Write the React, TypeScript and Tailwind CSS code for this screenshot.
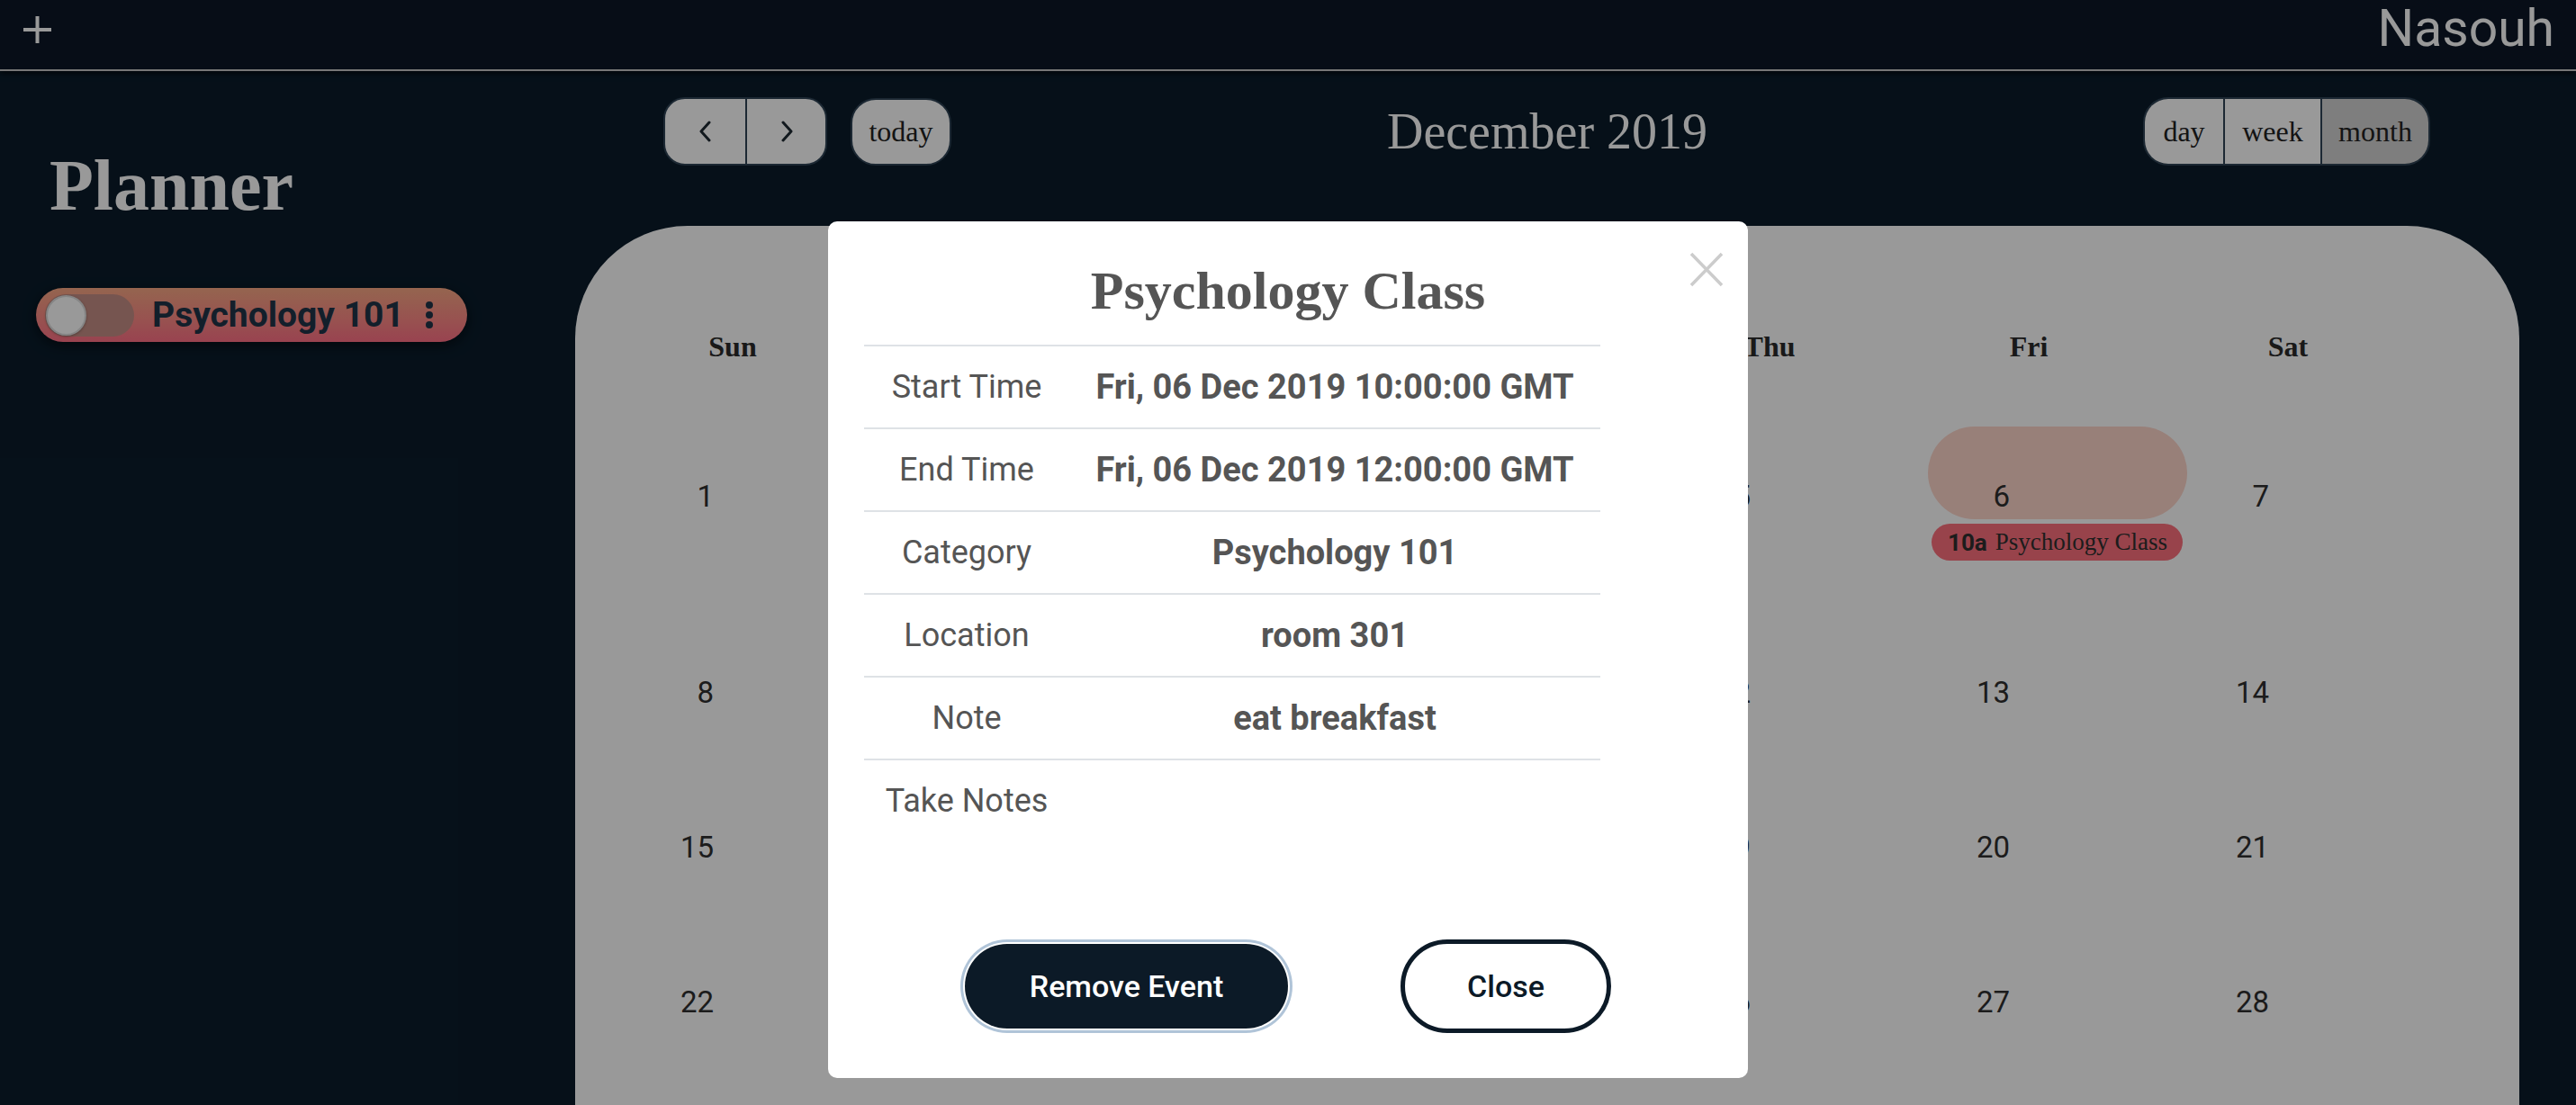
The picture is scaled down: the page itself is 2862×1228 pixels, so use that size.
import React from "react";

const serif = "font-['Liberation_Serif','Times_New_Roman',serif]";

type Day = { n: number; today?: boolean; event?: boolean };

const weeks: Day[][] = [
  [{ n: 1 }, { n: 2 }, { n: 3 }, { n: 4 }, { n: 5 }, { n: 6, today: true, event: true }, { n: 7 }],
  [{ n: 8 }, { n: 9 }, { n: 10 }, { n: 11 }, { n: 12 }, { n: 13 }, { n: 14 }],
  [{ n: 15 }, { n: 16 }, { n: 17 }, { n: 18 }, { n: 19 }, { n: 20 }, { n: 21 }],
  [{ n: 22 }, { n: 23 }, { n: 24 }, { n: 25 }, { n: 26 }, { n: 27 }, { n: 28 }],
  [{ n: 29 }, { n: 30 }, { n: 31 }, { n: 1 }, { n: 2 }, { n: 3 }, { n: 4 }],
];

const dayNames = ["Sun", "Mon", "Tue", "Wed", "Thu", "Fri", "Sat"];

const rows: [string, string][] = [
  ["Start Time", "Fri, 06 Dec 2019 10:00:00 GMT"],
  ["End Time", "Fri, 06 Dec 2019 12:00:00 GMT"],
  ["Category", "Psychology 101"],
  ["Location", "room 301"],
  ["Note", "eat breakfast"],
  ["Take Notes", ""],
];

function Chevron({ dir }: { dir: "l" | "r" }) {
  return (
    <svg width="18" height="24" viewBox="0 0 18 24" fill="none">
      <path
        d={dir === "l" ? "M13 2 L4 12 L13 22" : "M5 2 L14 12 L5 22"}
        stroke="#1f2a33"
        strokeWidth="3"
        strokeLinecap="round"
        strokeLinejoin="round"
      />
    </svg>
  );
}

export default function App() {
  return (
    <div className="relative h-[1228px] w-[2862px] overflow-hidden bg-[#0a1c2b] font-['Roboto',sans-serif]">
      {/* top bar */}
      <header className="flex h-[79px] items-start justify-between border-b-2 border-[#c6c6c6] bg-[#0c1727] shadow-[0_3px_6px_rgba(0,0,0,0.6)]">
        <svg className="ml-[26px] mt-[18px]" width="31" height="30" viewBox="0 0 31 30" fill="none">
          <path d="M15.5 0 V30 M0 15 H31" stroke="#ffffff" strokeWidth="4" />
        </svg>
        <div className="mr-[24px] mt-[3px] text-[57px] leading-none text-white">Nasouh</div>
      </header>

      <div className="flex">
        {/* sidebar */}
        <aside className="w-[639px] shrink-0">
          <h1 className={`${serif} ml-[55px] mt-[87px] text-[80px] font-bold leading-none text-white`}>Planner</h1>
          <div className="ml-[40px] mt-[74px] flex h-[60px] w-[479px] items-center rounded-full bg-gradient-to-b from-[#f8a884] to-[#ff7085] pl-[10px] shadow-[0_4px_14px_rgba(0,0,0,0.55)]">
            <div className="flex h-[47px] w-[99px] items-center rounded-full bg-[#c58e85] pl-[1px]">
              <div className="h-[45px] w-[45px] rounded-full border-2 border-[#dedede] bg-white shadow-[0_1px_3px_rgba(0,0,0,0.3)]" />
            </div>
            <span className="ml-[20px] text-[39px] font-bold leading-none text-[#213548]">Psychology 101</span>
            <div className="ml-[24px] flex flex-col gap-[3px]">
              <span className="h-[8px] w-[8px] rounded-full bg-[#213548]" />
              <span className="h-[8px] w-[8px] rounded-full bg-[#213548]" />
              <span className="h-[8px] w-[8px] rounded-full bg-[#213548]" />
            </div>
          </div>
        </aside>

        {/* calendar */}
        <main className="w-[2160px] shrink-0">
          <div className="mt-[29px] flex h-[76px] items-center justify-between pl-[98px] pr-[99px]">
            <div className="flex items-center">
              <div className="flex h-[76px] overflow-hidden rounded-[24px] border-2 border-[#2f4355] bg-white">
                <div className="flex w-[89px] items-center justify-center">
                  <Chevron dir="l" />
                </div>
                <div className="flex w-[89px] items-center justify-center border-l-2 border-[#2f4355]">
                  <Chevron dir="r" />
                </div>
              </div>
              <div className={`${serif} ml-[26px] flex h-[75px] w-[112px] items-center justify-center rounded-[28px] border-2 border-[#2f4355] bg-white text-[32px] text-[#222]`}>
                today
              </div>
            </div>
            <div className={`${serif} text-[56px] leading-none text-white`}>December 2019</div>
            <div className={`${serif} flex h-[76px] overflow-hidden rounded-[28px] border-2 border-[#2f4355] text-[32px] text-[#222]`}>
              <div className="flex w-[87px] items-center justify-center bg-white">day</div>
              <div className="flex w-[108px] items-center justify-center border-l-2 border-[#2f4355] bg-white">week</div>
              <div className="flex w-[120px] items-center justify-center border-l-2 border-[#2f4355] bg-[#d2d2d2]">month</div>
            </div>
          </div>

          <div className="mt-[67px] h-[1000px] rounded-t-[125px] bg-white pl-[31px] pr-[113px] pt-[100px]">
            <div className={`${serif} mb-[55px] grid h-[68px] grid-cols-7 items-center text-[32px] font-bold text-[#2b2b2b]`}>
              {dayNames.map((d) => (
                <div key={d} className="text-center">
                  {d}
                </div>
              ))}
            </div>
            <div className="grid grid-cols-7">
              {weeks.flat().map((d, i) => (
                <div key={i} className="pb-[69px]">
                  <div
                    className={`ml-[32px] flex h-[103px] w-[288px] items-start rounded-full pt-[61px] ${
                      d.today ? "bg-[#fdd5ca]" : ""
                    }`}
                  >
                    <span className="w-[91px] text-right text-[33px] leading-none text-[#2f2f2f]">{d.n}</span>
                  </div>
                  {d.event && (
                    <div className="ml-[36px] mt-[5px] flex h-[41px] w-[279px] items-center whitespace-nowrap rounded-full bg-[#fd717d] pl-[18px] text-[#303030]">
                      <span className="text-[26px] font-bold leading-none">10a</span>
                      <span className={`${serif} ml-[9px] text-[27px] leading-none`}>Psychology Class</span>
                    </div>
                  )}
                </div>
              ))}
            </div>
          </div>
        </main>
      </div>

      {/* modal overlay */}
      <div className="absolute inset-0 flex items-start justify-center bg-black/40 pt-[246px]">
        <div className="relative h-[952px] w-[1022px] rounded-[10px] bg-white">
          <svg className="absolute right-[27px] top-[34px]" width="38" height="39" viewBox="0 0 38 39" fill="none">
            <path d="M2 2 L36 37 M36 2 L2 37" stroke="#cccccc" strokeWidth="3.5" />
          </svg>
          <h2 className={`${serif} pt-[47px] text-center text-[60px] font-bold leading-none text-[#555]`}>Psychology Class</h2>
          <div className="ml-[40px] mt-[30px] w-[818px]">
            {rows.map(([label, value]) => (
              <div key={label} className="flex h-[92px] items-center border-t-2 border-[#dee2e6] text-[36px] text-[#555]">
                <div className="w-[228px] text-center">{label}</div>
                <div className="flex-1 text-center text-[38px] font-bold">{value}</div>
              </div>
            ))}
          </div>
          <div className="mt-[109px] flex items-center justify-center gap-[125px]">
            <button className="h-[94px] w-[359px] rounded-full bg-[#0c1a27] text-[34px] font-medium text-white shadow-[0_0_0_2px_#ffffff,0_0_0_5px_#b0c4d8]">
              Remove Event
            </button>
            <button className="h-[104px] w-[234px] rounded-full border-[5px] border-[#0c1a27] bg-white text-[34px] font-medium text-[#0c1a27]">
              Close
            </button>
          </div>
        </div>
      </div>
    </div>
  );
}
